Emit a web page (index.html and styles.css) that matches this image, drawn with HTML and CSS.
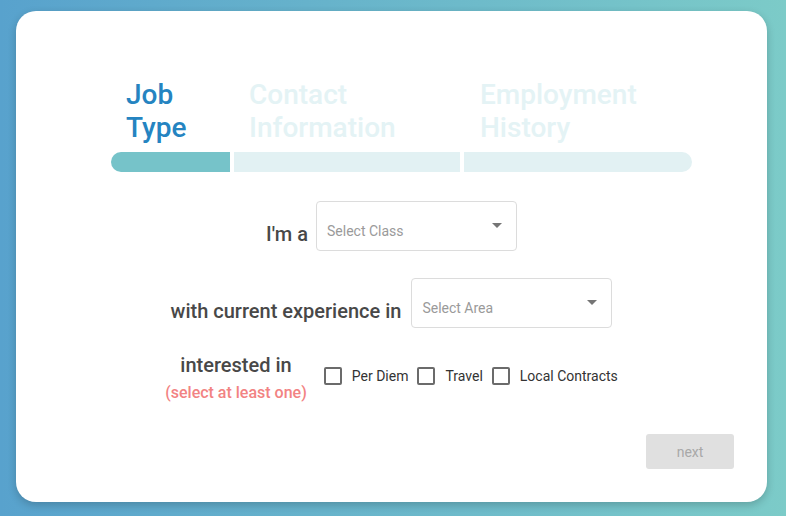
FILE: index.html
```html
<!DOCTYPE html>
<html lang="en">

<head>
    <meta charset="UTF-8">
    <meta name="viewport" content="width=device-width, initial-scale=1.0">
    <title>Job Type</title>
    <link rel="stylesheet" href="styles.css">
</head>

<body>
    <div class="card">
        <div class="steps">
            <div class="step step-first active">
                <div class="step-title">Job Type</div>
                <div class="step-bar"></div>
            </div>
            <div class="step step-mid">
                <div class="step-title">Contact Information</div>
                <div class="step-bar"></div>
            </div>
            <div class="step step-last">
                <div class="step-title">Employment History</div>
                <div class="step-bar"></div>
            </div>
        </div>

        <div class="row row-class">
            <div class="row-label">I'm a</div>
            <div class="select">
                <span class="select-text">Select Class</span>
                <svg class="caret" width="10" height="5" viewBox="0 0 10 5"><path d="M0 0h10L5 5z" fill="#757575"/></svg>
            </div>
        </div>

        <div class="row row-area">
            <div class="row-label">with current experience in</div>
            <div class="select">
                <span class="select-text">Select Area</span>
                <svg class="caret" width="10" height="5" viewBox="0 0 10 5"><path d="M0 0h10L5 5z" fill="#757575"/></svg>
            </div>
        </div>

        <div class="row row-interest">
            <div class="interest-label">
                <div class="interest-title">interested in</div>
                <div class="interest-hint">(select at least one)</div>
            </div>
            <div class="checks">
                <label class="check"><span class="box"></span>Per Diem</label>
                <label class="check"><span class="box"></span>Travel</label>
                <label class="check"><span class="box"></span>Local Contracts</label>
            </div>
        </div>

        <div class="actions">
            <button class="next" disabled>next</button>
        </div>
    </div>
</body>

</html>
```

FILE: styles.css
```css
* {
    margin: 0;
    padding: 0;
    box-sizing: border-box;
}

body {
    width: 786px;
    height: 516px;
    padding: 11px 19px 14px 16px;
    background: linear-gradient(to right, #58a2cd, #7ccbc8);
    font-family: Roboto, "Liberation Sans", sans-serif;
    overflow: hidden;
}

.card {
    height: 491px;
    background: #fff;
    border-radius: 20px;
    box-shadow: 0 3px 8px rgba(0, 0, 0, 0.2);
    padding: 67px 33px 33px 95px;
    display: flex;
    flex-direction: column;
}

/* steps */

.steps {
    display: flex;
    gap: 4px;
}

.step-first {
    width: 119px;
}

.step-mid {
    width: 226px;
}

.step-last {
    width: 228px;
}

.step-title {
    font-size: 28px;
    line-height: 33px;
    font-weight: 500;
    color: #e4f3f5;
    padding-left: 15px;
    height: 66px;
}

.step-last .step-title {
    padding-left: 16px;
}

.step.active .step-title {
    color: #2584c1;
}

.step-bar {
    height: 20px;
    margin-top: 8px;
    background: #e2f1f3;
}

.step.active .step-bar {
    background: #76c3c9;
}

.step-first .step-bar {
    border-radius: 10px 0 0 10px;
}

.step-last .step-bar {
    border-radius: 0 10px 10px 0;
}

/* form rows */

.row {
    display: flex;
    justify-content: center;
    align-items: flex-end;
    margin-left: -62px;
}

.row-class {
    margin-top: 29px;
    gap: 8px;
}

.row-area {
    margin-top: 27px;
    gap: 10px;
}

.row-label {
    font-size: 20px;
    line-height: 22px;
    font-weight: 500;
    color: #484848;
    margin-bottom: 6px;
}

.select {
    width: 201px;
    height: 50px;
    border: 1px solid #dcdcdc;
    border-radius: 4px;
    display: flex;
    justify-content: space-between;
    padding: 0 14px 0 10px;
}

.select-text {
    font-size: 14px;
    line-height: 16px;
    color: #9a9a9a;
    padding-top: 21px;
}

.caret {
    margin-top: 21px;
}

.row-interest {
    margin-top: 23px;
    align-items: flex-start;
    gap: 17px;
}

.interest-label {
    text-align: center;
}

.interest-title {
    font-size: 20px;
    line-height: 28px;
    font-weight: 500;
    color: #484848;
}

.interest-hint {
    font-size: 16px;
    line-height: 24px;
    font-weight: 500;
    color: #f28383;
    margin-top: 2px;
}

.checks {
    display: flex;
    align-items: center;
    gap: 9px;
    margin-top: 16px;
}

.check {
    display: flex;
    align-items: center;
    gap: 10px;
    font-size: 14px;
    color: #333;
}

.box {
    width: 18px;
    height: 18px;
    border: 2px solid #6b6b6b;
    border-radius: 2px;
}

/* next */

.actions {
    margin-top: auto;
    display: flex;
    justify-content: flex-end;
}

.next {
    width: 88px;
    height: 35px;
    border: none;
    border-radius: 3px;
    background: #e0e0e0;
    color: #a8a8a8;
    font-family: Roboto, "Liberation Sans", sans-serif;
    font-size: 14px;
}
```
